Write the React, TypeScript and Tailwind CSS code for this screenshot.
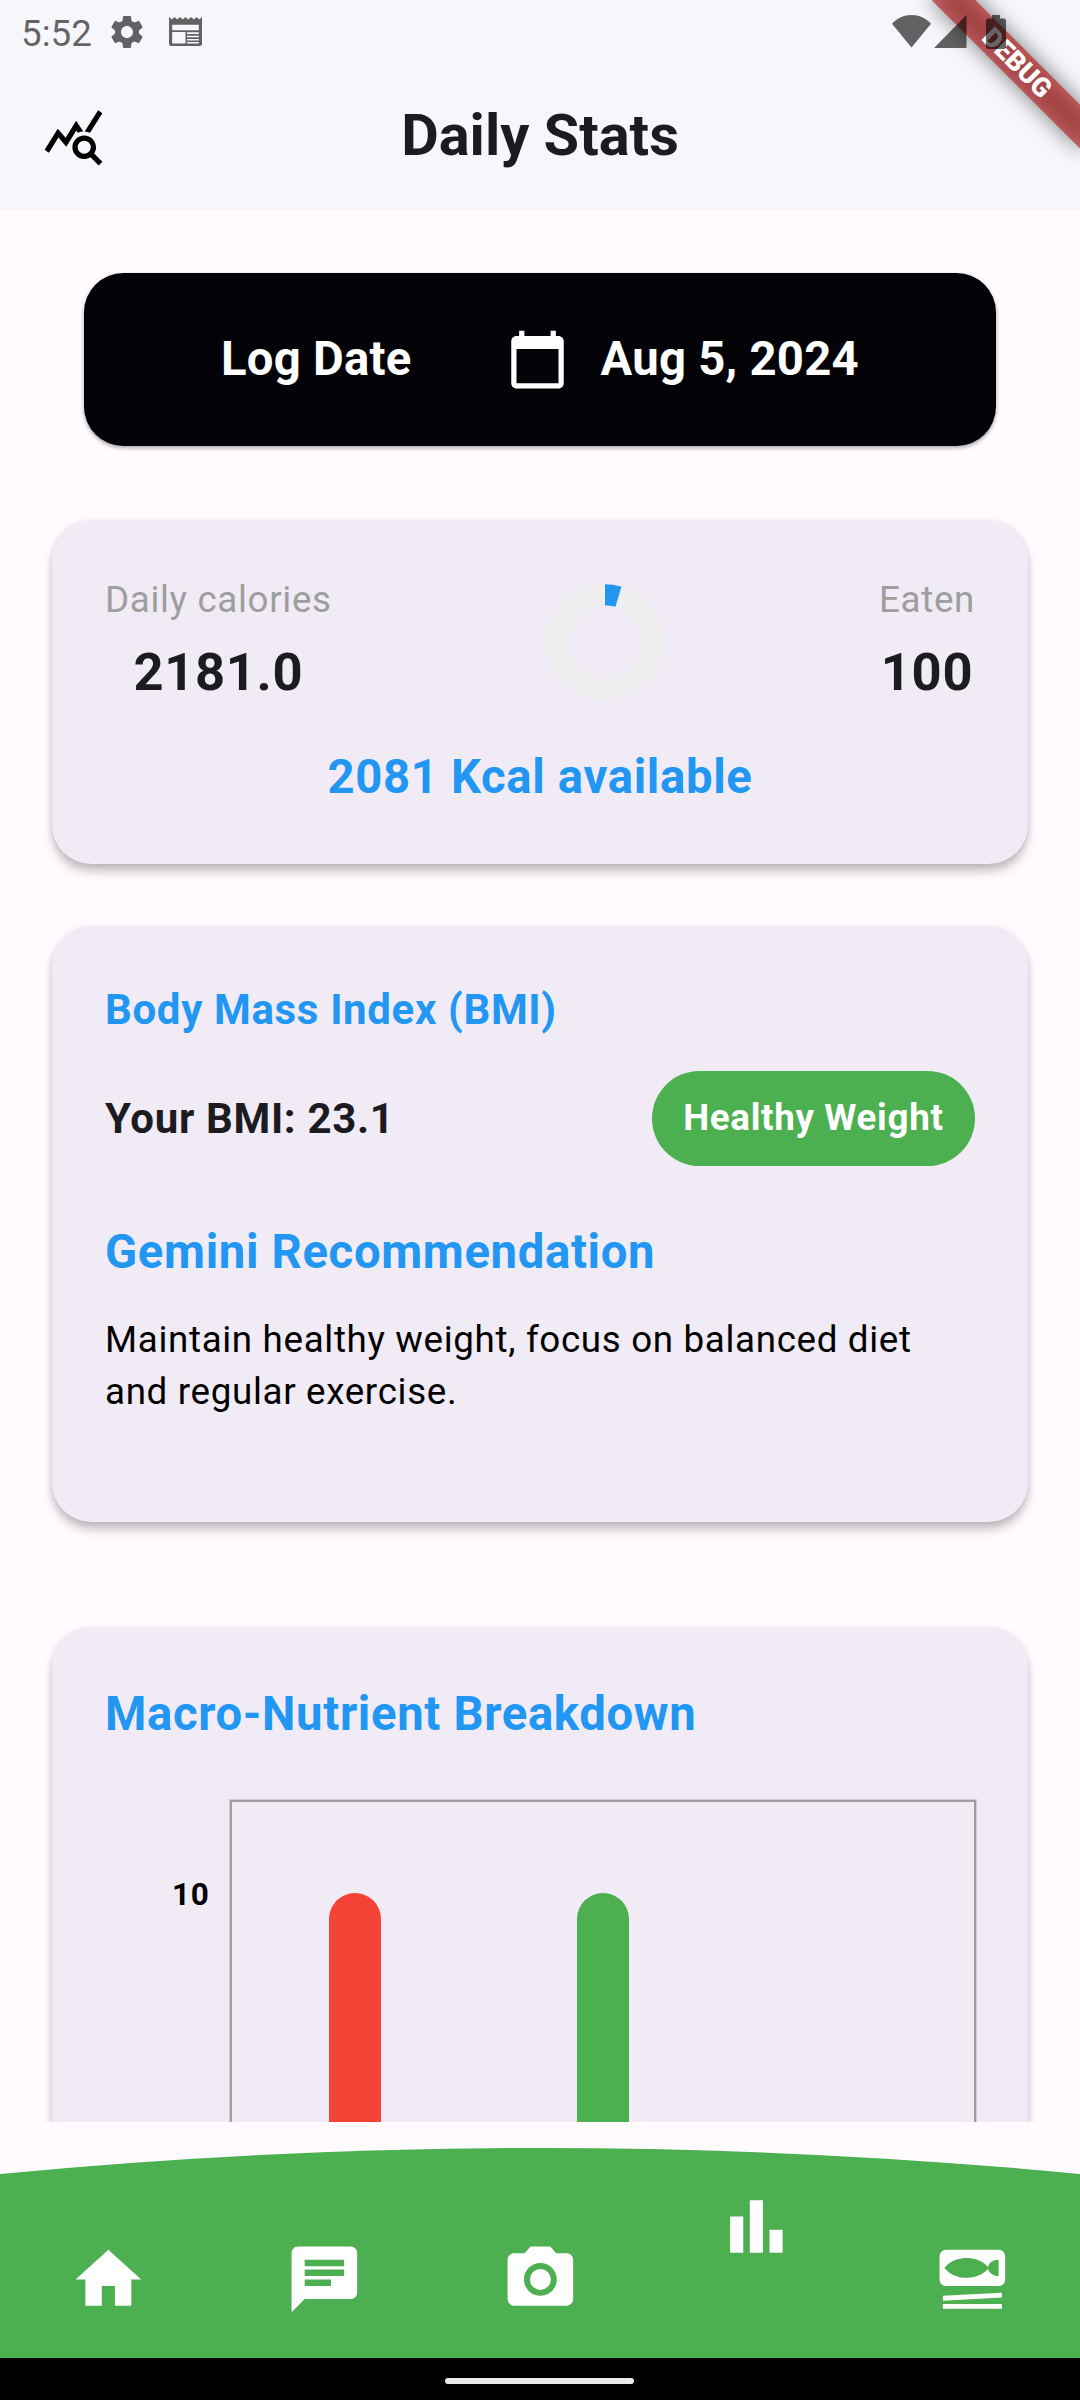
import React from "react";
import { MdQueryStats, MdSetMeal, MdSettings } from "react-icons/md";

function StatusBar() {
  return (
    <div className="absolute inset-x-0 top-0 z-20 flex h-[63px] items-center text-black/60">
      <span className="ml-[21px] w-[86px] pt-[3px] text-[36.75px] leading-[63px]">5:52</span>
      <MdSettings className="size-[40px]" />
      <svg className="ml-[21.5px] h-[30px] w-[33px]" viewBox="0 0 33 30" fill="currentColor">
        <path
          fillRule="evenodd"
          d="M0 0l2.8 2.4L5.5 0l2.8 2.4L11 0l2.8 2.4L16.5 0l2.8 2.4L22 0l2.8 2.4L27.5 0l2.8 2.4L33 0v26.5a2.5 2.5 0 0 1-2.5 2.5h-28A2.5 2.5 0 0 1 0 26.5zM3.2 7.8v5.4h26.6V7.8zM3.2 15v11.4h13.3V15zM18 15.3v1.8h11.8v-1.8zM18 18.7v1.6h11.8v-1.6zM18 21.9v1.6h11.8v-1.6zM18 25v1.5h11.8V25z"
        />
      </svg>
      <div className="ml-auto mr-[74px] flex items-center">
        <svg className="h-[33px] w-[39px]" viewBox="0 0 39 33" fill="currentColor">
          <path d="M0 8.7C5 3.2 12 0 19.5 0S34 3.2 39 8.7L19.5 32.6z" />
        </svg>
        <svg className="ml-[3px] h-[33px] w-[33px]" viewBox="0 0 33 33" fill="currentColor">
          <path d="M0 33L32.5 0v33z" />
        </svg>
        <svg className="ml-[19px] h-[34px] w-[20px]" viewBox="0 0 20 34" fill="currentColor">
          <path d="M6 0h8v3.5h3.5A2.5 2.5 0 0 1 20 6v25.5a2.5 2.5 0 0 1-2.5 2.5h-15A2.5 2.5 0 0 1 0 31.5V6a2.5 2.5 0 0 1 2.5-2.5H6z" />
        </svg>
      </div>
    </div>
  );
}

function DebugBanner() {
  return (
    <div className="absolute right-0 top-0 z-10 size-[210px] overflow-hidden">
      <div className="absolute left-full top-0 size-0 origin-top-left rotate-45">
        <div className="absolute left-[-105px] top-[73.5px] h-[31.5px] w-[210px] bg-black/50 blur-[10.4px]" />
        <div className="absolute left-[-105px] top-[73.5px] h-[31.5px] w-[210px] bg-[#b71c1ca0] text-center text-[26.8px] font-black leading-[31.5px] text-white">
          DEBUG
        </div>
      </div>
    </div>
  );
}

function Card({ className, children }: { className: string; children: React.ReactNode }) {
  return (
    <section
      className={
        "ml-[52px] mr-[52.5px] shrink-0 rounded-[39.4px] bg-[#f0ebf5] pl-[53px] pr-[52.5px] tracking-[0.66px] shadow-[0_8px_11px_-1px_rgba(0,0,0,0.25),0_1px_6px_rgba(0,0,0,0.08)] " +
        className
      }
    >
      {children}
    </section>
  );
}

function CalorieRing() {
  const angle = (100 / 2181) * 2 * Math.PI;
  const r = 47.25;
  return (
    <svg className="size-[116px]" viewBox="-58 -58 116 116" fill="none" strokeWidth={21}>
      <circle r={r} stroke="#eeeeee" />
      <path
        d={`M0 ${-r}A${r} ${r} 0 0 1 ${r * Math.sin(angle)} ${-r * Math.cos(angle)}`}
        stroke="#2196f3"
      />
    </svg>
  );
}

const HOME = "M10 20v-6h4v6h5v-8h3L12 3 2 12h3v8z";
const CHAT =
  "M20 2H4c-1.1 0-1.99.9-1.99 2L2 22l4-4h14c1.1 0 2-.9 2-2V4c0-1.1-.9-2-2-2zM6 9h12v2H6V9zm8 5H6v-2h8v2zm4-6H6V6h12v2z";
const CAMERA =
  "M12 8.8a3.2 3.2 0 1 0 0 6.4a3.2 3.2 0 1 0 0-6.4zM9 2L7.17 4H4c-1.1 0-2 .9-2 2v12c0 1.1.9 2 2 2h16c1.1 0 2-.9 2-2V6c0-1.1-.9-2-2-2h-3.17L15 2H9zm3 15c-2.76 0-5-2.24-5-5s2.24-5 5-5 5 2.24 5 5-2.24 5-5 5z";
const BARS = "M4 9h4v11H4zM16 13h4v7h-4zM10 4h4v16h-4z";

function NavIcon({ d }: { d: string }) {
  return (
    <svg className="size-[78.75px]" viewBox="0 0 24 24" fill="currentColor">
      <path d={d} />
    </svg>
  );
}

function BottomNav() {
  return (
    <nav className="relative h-[236px] shrink-0">
      <svg className="absolute inset-0 size-full" viewBox="0 0 1080 236" preserveAspectRatio="none">
        <path d="M0 52Q540 0 1080 52V236H0z" fill="#4caf50" />
      </svg>
      <div className="relative grid h-full grid-cols-5 justify-items-center pt-[118px] text-white">
        <NavIcon d={HOME} />
        <NavIcon d={CHAT} />
        <NavIcon d={CAMERA} />
        <div className="-mt-[53px]">
          <NavIcon d={BARS} />
        </div>
        <MdSetMeal className="size-[78.75px]" />
      </div>
    </nav>
  );
}

export default function App() {
  return (
    <div className="relative flex h-[2400px] w-[1080px] flex-col overflow-hidden bg-[#fffbff] font-['Roboto',sans-serif] text-[#1c1b1f]">
      <StatusBar />
      <DebugBanner />
      <header className="grid h-[210px] shrink-0 grid-cols-[1fr_auto_1fr] items-center bg-[#f6f6fb] px-[42px] pt-[63px]">
        <MdQueryStats className="size-[63px] text-black" />
        <h1 className="pb-[3px] text-[57.75px] font-bold leading-[74px]">Daily Stats</h1>
      </header>

      <main className="flex h-[1912px] shrink-0 flex-col overflow-hidden">
        <div className="mx-[84px] mt-[63px] flex h-[173px] shrink-0 items-center rounded-[39.4px] bg-[#040308] pl-[137px] text-[47.25px] font-bold tracking-[0.26px] text-white shadow-[0_2px_4px_rgba(0,0,0,0.35)]">
          <span className="w-[285px]">Log Date</span>
          <svg className="size-[63px]" viewBox="0 0 24 24" fill="currentColor">
            <path d="M20 3h-1V1h-2v2H7V1H5v2H4c-1.1 0-2 .9-2 2v16c0 1.1.9 2 2 2h16c1.1 0 2-.9 2-2V5c0-1.1-.9-2-2-2zm0 18H4V8h16v13z" />
          </svg>
          <span className="ml-[31.5px]">Aug 5, 2024</span>
        </div>

        <Card className="mt-[73.5px] h-[344px] pt-[54.5px]">
          <div className="flex items-center justify-between">
            <div className="flex flex-col items-center gap-[8.5px]">
              <span className="text-[36.75px] leading-[52.5px] text-[#9e9e9e]">Daily calories</span>
              <span className="text-[52.5px] font-bold leading-[75px]">2181.0</span>
            </div>
            <CalorieRing />
            <div className="flex flex-col items-center gap-[8.5px]">
              <span className="text-[36.75px] leading-[52.5px] text-[#9e9e9e]">Eaten</span>
              <span className="text-[52.5px] font-bold leading-[75px]">100</span>
            </div>
          </div>
          <p className="mt-[34px] text-center text-[47.25px] font-bold leading-[67.5px] text-[#2196f3]">
            2081 Kcal available
          </p>
        </Card>

        <Card className="mt-[62.5px] h-[596px] pt-[54px]">
          <h2 className="text-[42px] font-bold leading-[60px] text-[#2196f3]">Body Mass Index (BMI)</h2>
          <div className="mt-[31px] flex h-[94.5px] items-center justify-between">
            <span className="pt-[2px] text-[42px] font-bold leading-[60px]">Your BMI: 23.1</span>
            <span className="rounded-full bg-[#4caf50] px-[31.5px] text-[36.75px] font-bold leading-[94.5px] text-white">
              Healthy Weight
            </span>
          </div>
          <h2 className="mt-[53.5px] text-[47.25px] font-bold leading-[67.5px] text-[#2196f3]">
            Gemini Recommendation
          </h2>
          <p className="mt-[27px] text-[36.75px] leading-[52px] text-black">
            Maintain healthy weight, focus on balanced diet and regular exercise.
          </p>
        </Card>

        <Card className="mt-[105px] h-[800px] pt-[54px]">
          <h2 className="text-[47.25px] font-bold leading-[67.5px] text-[#2196f3]">
            Macro-Nutrient Breakdown
          </h2>
          <div className="-mr-px mt-[51.5px] flex">
            <span className="w-[125px] pr-[20.5px] pt-[72px] text-right text-[31.5px] font-bold leading-[45px] text-black">
              10
            </span>
            <div className="flex h-[600px] flex-1 items-start gap-[195.6px] border-2 border-[#9e9e9e] pl-[96.75px] pt-[91px] shadow-[0_0_0_1px_#d0ccd3]">
              <div className="h-[600px] w-[52.5px] rounded-t-full bg-[#f44336]" />
              <div className="h-[600px] w-[52.5px] rounded-t-full bg-[#4caf50]" />
            </div>
          </div>
        </Card>
      </main>

      <BottomNav />
      <div className="flex h-[42px] shrink-0 justify-center bg-black pr-[2px] pt-[20px]">
        <div className="h-[6px] w-[189px] rounded-full bg-[#e9e9e9]" />
      </div>
    </div>
  );
}
